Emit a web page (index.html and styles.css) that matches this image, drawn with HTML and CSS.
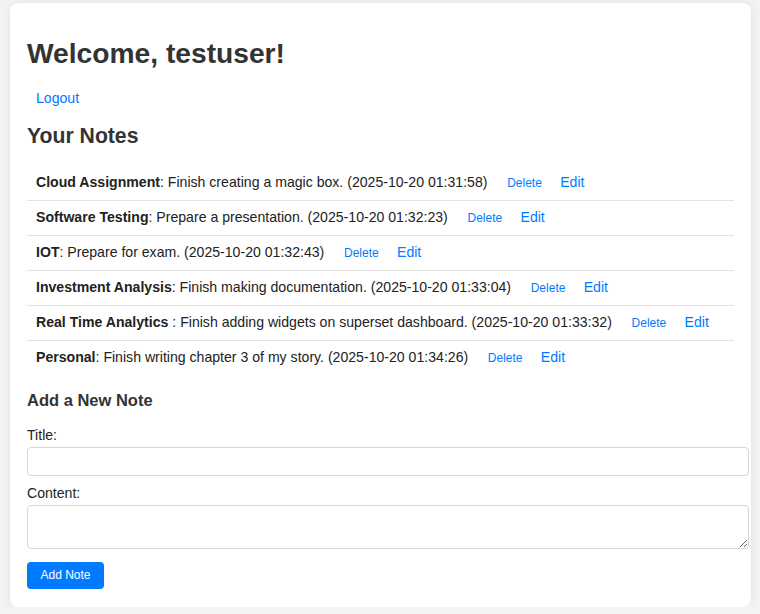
FILE: index.html
```html
<!DOCTYPE html>
<html lang="en">
<head>
<meta charset="utf-8">
<title>Notes</title>
<link rel="stylesheet" href="styles.css">
</head>
<body>
<div class="card">
  <h1 class="welcome">Welcome, testuser!</h1>
  <div class="logout-wrap"><a class="logout" href="#">Logout</a></div>
  <h2 class="section-title">Your Notes</h2>
  <ul class="notes">
    <li class="note"><strong>Cloud Assignment</strong>: Finish creating a magic box. (2025-10-20 01:31:58)<button class="del" type="button">Delete</button><a class="edit" href="#">Edit</a></li>
    <li class="note"><strong>Software Testing</strong>: Prepare a presentation. (2025-10-20 01:32:23)<button class="del" type="button">Delete</button><a class="edit" href="#">Edit</a></li>
    <li class="note"><strong>IOT</strong>: Prepare for exam. (2025-10-20 01:32:43)<button class="del" type="button">Delete</button><a class="edit" href="#">Edit</a></li>
    <li class="note"><strong>Investment Analysis</strong>: Finish making documentation. (2025-10-20 01:33:04)<button class="del" type="button">Delete</button><a class="edit" href="#">Edit</a></li>
    <li class="note"><strong>Real Time Analytics </strong>: Finish adding widgets on superset dashboard. (2025-10-20 01:33:32)<button class="del" type="button">Delete</button><a class="edit" href="#">Edit</a></li>
    <li class="note"><strong>Personal</strong>: Finish writing chapter 3 of my story. (2025-10-20 01:34:26)<button class="del" type="button">Delete</button><a class="edit" href="#">Edit</a></li>
  </ul>
  <h3 class="add-title">Add a New Note</h3>
  <form class="add-form">
    <label class="lbl" for="title">Title:</label>
    <input class="field" id="title" type="text">
    <label class="lbl" for="content">Content:</label>
    <textarea class="field area" id="content"></textarea>
    <button class="add-btn" type="button">Add Note</button>
  </form>
</div>
</body>
</html>
```
FILE: styles.css
```css
html, body {
  margin: 0;
  padding: 0;
  background: #f3f3f3;
}
body {
  font-family: "Liberation Sans", Arial, sans-serif;
  font-size: 14.1px;
  color: #333;
  overflow: hidden;
}
.card {
  background: #fff;
  width: 707px;
  margin: 3px 0 0 10px;
  padding: 18px 17px 17.5px 17px;
  border-radius: 8px;
  box-shadow: 0 0 8px rgba(0, 0, 0, 0.08);
}
.welcome {
  font-size: 28.2px;
  line-height: 33px;
  margin: 16px 0 20.2px;
  color: #333;
}
.logout-wrap {
  padding: 0 9px;
  line-height: 16.5px;
}
.logout {
  color: #007bff;
  text-decoration: none;
}
.section-title {
  font-size: 21.2px;
  line-height: 25px;
  margin: 16.5px 0 18.4px;
  color: #333;
}
.notes {
  list-style: none;
  margin: 0;
  padding: 0;
}
.note {
  line-height: 18px;
  padding: 6.8px 9px 9.1px;
  border-bottom: 1px solid #e3e3e3;
  color: #222;
}
.note:last-child {
  border-bottom: none;
}
.note strong {
  color: #222;
}
.del {
  font-family: "Liberation Sans", Arial, sans-serif;
  font-size: 12px;
  line-height: 14px;
  color: #007bff;
  background: none;
  border: none;
  padding: 0;
  margin: 0 0 0 19.7px;
  cursor: pointer;
}
.edit {
  margin-left: 18.3px;
  color: #007bff;
  text-decoration: none;
}
.add-title {
  font-size: 16.5px;
  line-height: 19.3px;
  margin: 16.3px 0 16.6px;
  color: #333;
}
.add-form {
  margin: 0;
}
.lbl {
  display: block;
  line-height: 16.5px;
  color: #222;
}
.field {
  display: block;
  box-sizing: border-box;
  width: 722px;
  height: 28.4px;
  margin: 3.8px 0 9.3px;
  border: 1px solid #d6d6d6;
  border-radius: 4px;
  padding: 6px;
  font-family: "Liberation Sans", Arial, sans-serif;
  font-size: 14.1px;
  background: #fff;
}
.area {
  height: 43.4px;
  margin-bottom: 13px;
}
.add-btn {
  display: block;
  width: 77px;
  height: 27.3px;
  padding: 0;
  border: none;
  border-radius: 4px;
  background: #007bff;
  color: #fff;
  font-family: "Liberation Sans", Arial, sans-serif;
  font-size: 12px;
  cursor: pointer;
}
```
